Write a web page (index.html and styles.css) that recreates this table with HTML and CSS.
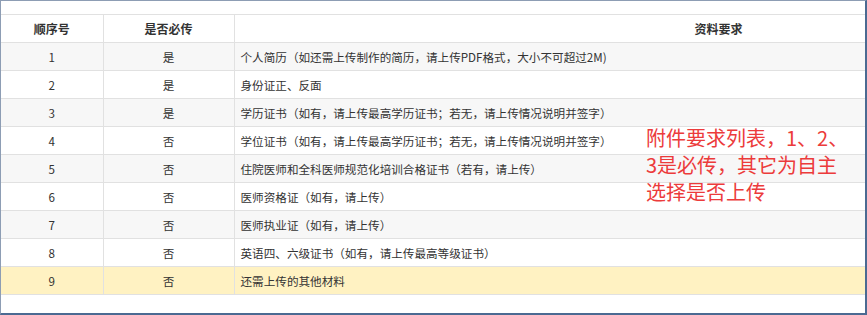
FILE: index.html
```html
<!DOCTYPE html>
<html lang="zh-CN">
<head>
<meta charset="utf-8">
<title>附件要求</title>
<link rel="stylesheet" href="styles.css">
</head>
<body>
<div class="frame">
  <table class="req">
    <colgroup>
      <col class="c-no">
      <col class="c-must">
      <col class="c-desc">
    </colgroup>
    <thead>
      <tr><th>顺序号</th><th>是否必传</th><th class="h-desc">资料要求</th></tr>
    </thead>
    <tbody>
      <tr class="odd"><td class="ctr">1</td><td class="ctr">是</td><td>个人简历（如还需上传制作的简历，请上传PDF格式，大小不可超过2M)</td></tr>
      <tr><td class="ctr">2</td><td class="ctr">是</td><td>身份证正、反面</td></tr>
      <tr class="odd"><td class="ctr">3</td><td class="ctr">是</td><td>学历证书（如有，请上传最高学历证书；若无，请上传情况说明并签字）</td></tr>
      <tr><td class="ctr">4</td><td class="ctr">否</td><td>学位证书（如有，请上传最高学历证书；若无，请上传情况说明并签字）</td></tr>
      <tr class="odd"><td class="ctr">5</td><td class="ctr">否</td><td>住院医师和全科医师规范化培训合格证书（若有，请上传）</td></tr>
      <tr><td class="ctr">6</td><td class="ctr">否</td><td>医师资格证（如有，请上传）</td></tr>
      <tr class="odd"><td class="ctr">7</td><td class="ctr">否</td><td>医师执业证（如有，请上传）</td></tr>
      <tr><td class="ctr">8</td><td class="ctr">否</td><td>英语四、六级证书（如有，请上传最高等级证书）</td></tr>
      <tr class="sel"><td class="ctr">9</td><td class="ctr">否</td><td>还需上传的其他材料</td></tr>
    </tbody>
  </table>
  <div class="note">附件要求列表，1、2、<br>3是必传，其它为自主<br>选择是否上传</div>
</div>
</body>
</html>
```
FILE: styles.css
```css
html, body {
  margin: 0;
  padding: 0;
  background: #ffffff;
}
.frame {
  position: relative;
  width: 867px;
  height: 315px;
  box-sizing: border-box;
  border-top: 1px solid #8d9db4;
  border-left: 1px solid #8d9db4;
  border-right: 2px solid #4b6a92;
  border-bottom: 2px solid #4b6a92;
  padding-top: 13px;
  font-family: "Noto Sans CJK SC", "Noto Sans", sans-serif;
}
.req {
  width: 100%;
  border-collapse: collapse;
  table-layout: fixed;
  font-size: 11.6px;
  color: #333333;
}
.c-no { width: 102px; }
.c-must { width: 131px; }
.req th, .req td {
  height: 27px;
  padding: 0 0 0 6px;
  border-top: 1px solid #e1e1e1;
  border-bottom: 1px solid #e1e1e1;
  border-left: 1px solid #e1e1e1;
  text-align: left;
  vertical-align: middle;
  white-space: nowrap;
  line-height: 16px;
}
.req th:first-child, .req td:first-child {
  border-left: none;
}
.req th {
  font-weight: bold;
  font-size: 12px;
  text-align: center;
  padding: 0;
  background: #ffffff;
}
.req th.h-desc {
  text-align: left;
  padding-left: 460px;
}
.req td.ctr {
  text-align: center;
  padding: 0;
}
.req tr.odd td {
  background: #f7f7f7;
}
.req tr.sel td {
  background: #fff2c2;
}
.note {
  position: absolute;
  left: 645px;
  top: 123px;
  font-size: 20px;
  line-height: 27px;
  color: #ec3b3b;
}
```
